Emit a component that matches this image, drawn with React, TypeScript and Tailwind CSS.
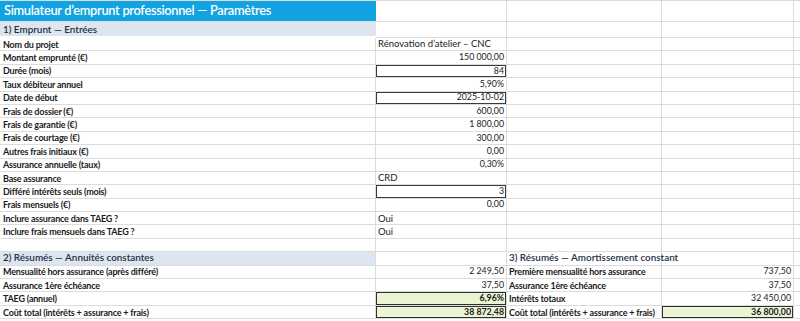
type Cell = { text?: string; align?: "l" | "r"; bold?: boolean; box?: boolean; green?: boolean };
type Row = { a?: string; b?: Cell; c?: Cell; d?: Cell; header?: boolean };

const rows: Row[] = [
  { a: "Nom du projet", b: { text: "Rénovation d’atelier – CNC", align: "l" } },
  { a: "Montant emprunté (€)", b: { text: "150 000,00" } },
  { a: "Durée (mois)", b: { text: "84", box: true } },
  { a: "Taux débiteur annuel", b: { text: "5,90%" } },
  { a: "Date de début", b: { text: "2025-10-02", box: true } },
  { a: "Frais de dossier (€)", b: { text: "600,00" } },
  { a: "Frais de garantie (€)", b: { text: "1 800,00" } },
  { a: "Frais de courtage (€)", b: { text: "300,00" } },
  { a: "Autres frais initiaux (€)", b: { text: "0,00" } },
  { a: "Assurance annuelle (taux)", b: { text: "0,30%" } },
  { a: "Base assurance", b: { text: "CRD", align: "l" } },
  { a: "Différé intérêts seuls (mois)", b: { text: "3", box: true } },
  { a: "Frais mensuels (€)", b: { text: "0,00" } },
  { a: "Inclure assurance dans TAEG ?", b: { text: "Oui", align: "l" } },
  { a: "Inclure frais mensuels dans TAEG ?", b: { text: "Oui", align: "l" } },
  {},
  { a: "2) Résumés — Annuités constantes", header: true, c: { text: "3) Résumés — Amortissement constant", align: "l" } },
  { a: "Mensualité hors assurance (après différé)", b: { text: "2 249,50" }, c: { text: "Première mensualité hors assurance", align: "l", bold: true }, d: { text: "737,50" } },
  { a: "Assurance 1ère échéance", b: { text: "37,50" }, c: { text: "Assurance 1ère échéance", align: "l", bold: true }, d: { text: "37,50" } },
  { a: "TAEG (annuel)", b: { text: "6,96%", green: true, bold: true }, c: { text: "Intérêts totaux", align: "l", bold: true }, d: { text: "32 450,00" } },
  { a: "Coût total (intérêts + assurance + frais)", b: { text: "38 872,48", green: true, bold: true }, c: { text: "Coût total (intérêts + assurance + frais)", align: "l", bold: true }, d: { text: "36 800,00", green: true, bold: true } },
];

const grid = "border-r border-b border-[#dcdcdc]";
const label = "text-[9px] font-bold tracking-[-0.2px]";
const head = "text-[9.9px] font-semibold text-[#243040]";

function ValueCell({ cell, w, header }: { cell?: Cell; w: string; header?: boolean }) {
  const c = cell || {};
  let font = "text-[8.8px]";
  if (header) font = head;
  else if (c.bold && c.align === "l") font = label;
  else if (c.bold) font = "text-[8.8px] font-bold";
  else if (c.align === "l") font = "text-[9.5px]";
  return (
    <div
      className={`${w} ${grid} h-full flex items-center px-[2px] whitespace-nowrap overflow-visible ${
        c.align === "l" ? "justify-start" : "justify-end"
      } ${c.box ? "ring-1 ring-inset ring-[#3a3a3a]" : ""} ${
        c.green ? "bg-[#eaf5d3] ring-1 ring-inset ring-[#2f2f2f]" : ""
      } ${font}`}
    >
      {c.text}
    </div>
  );
}

export default function App() {
  return (
    <div
      className="w-[800px] h-[321px] overflow-hidden bg-white text-[#1b1b1b] border-t border-[#dcdcdc]"
      style={{ fontFamily: "Lato, 'Liberation Sans', sans-serif" }}
    >
      <div className="flex h-[21px]">
        <div className="w-[376px] bg-[#12a3e2] text-white text-[12.8px] font-semibold tracking-[-0.3px] flex items-center pl-[4px] border-b border-[#dcdcdc]">
          Simulateur d’emprunt professionnel — Paramètres
        </div>
        <div className={`w-[131px] ${grid}`} />
        <div className={`w-[155px] ${grid}`} />
        <div className={`w-[132px] ${grid}`} />
        <div className="flex-1 border-b border-[#dcdcdc]" />
      </div>
      <div className="flex h-[16px]">
        <div className={`w-[376px] bg-[#dde6f0] ${head} flex items-center pl-[3px] border-b-2 border-white`}>
          1) Emprunt — Entrées
        </div>
        <div className={`w-[131px] ${grid}`} />
        <div className={`w-[155px] ${grid}`} />
        <div className={`w-[132px] ${grid}`} />
        <div className="flex-1 border-b border-[#dcdcdc]" />
      </div>
      {rows.map((r, i) => (
        <div key={i} className="flex h-[13.4px] leading-none">
          <div
            className={`w-[376px] ${grid} flex items-center pl-[3px] whitespace-nowrap ${
              r.header ? `bg-[#dde6f0] ${head}` : label
            }`}
          >
            {r.a}
          </div>
          <ValueCell cell={r.b} w="w-[131px]" />
          <ValueCell cell={r.c} w="w-[155px]" header={r.header} />
          <ValueCell cell={r.d} w="w-[132px]" />
          <div className="flex-1 border-b border-[#dcdcdc]" />
        </div>
      ))}
    </div>
  );
}
